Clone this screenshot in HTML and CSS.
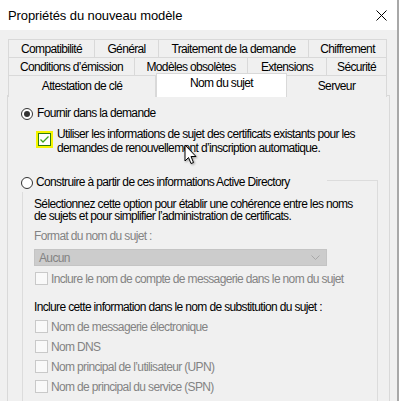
FILE: index.html
```html
<!DOCTYPE html>
<html lang="fr">
<head>
    <meta charset="UTF-8">
    <meta name="viewport" content="width=device-width, initial-scale=1.0">
    <title>Propriétés du nouveau modèle</title>
    <link rel="stylesheet" href="styles.css">
</head>
<body>
    <div class="window">
        <div class="titlebar">
            <span class="title">Propriétés du nouveau modèle</span>
            <svg class="close" width="11" height="11" viewBox="0 0 11 11">
                <path d="M0.5 0.5 L10.5 10.5 M10.5 0.5 L0.5 10.5" stroke="#000" stroke-width="1" fill="none"/>
            </svg>
        </div>

        <div class="tabs">
            <div class="tab-row">
                <div class="tab" style="width:87px">Compatibilité</div>
                <div class="tab" style="width:64px">Général</div>
                <div class="tab" style="width:150px">Traitement de la demande</div>
                <div class="tab" style="width:78px">Chiffrement</div>
            </div>
            <div class="tab-row">
                <div class="tab" style="width:127px">Conditions d’émission</div>
                <div class="tab" style="width:113px">Modèles obsolètes</div>
                <div class="tab" style="width:79px">Extensions</div>
                <div class="tab" style="width:60px">Sécurité</div>
            </div>
            <div class="tab-row front">
                <div class="tab" style="width:148px">Attestation de clé</div>
                <div class="tab active" style="width:131px">Nom du sujet</div>
                <div class="tab" style="width:100px">Serveur</div>
            </div>
        </div>

        <div class="panel">
            <div class="radio-row first">
                <span class="radio checked"></span>
                <span class="label">Fournir dans la demande</span>
            </div>

            <div class="check-row highlighted">
                <span class="marker">
                    <svg class="check-box on" width="13" height="13" viewBox="0 0 13 13">
                        <rect x="0.5" y="0.5" width="12" height="12" fill="#fff" stroke="#2f7d10"/>
                        <path d="M2.5 6.5 L5 9 L10.5 3.5" stroke="#3fa31c" stroke-width="1.3" fill="none"/>
                    </svg>
                </span>
                <span class="label wrap">Utiliser les informations de sujet des certificats existants pour les demandes de renouvellement d’inscription automatique.</span>
            </div>

            <div class="group-title">
                <span class="radio"></span>
                <span class="label">Construire à partir de ces informations Active Directory</span>
            </div>
            <div class="group">
                <p class="intro">Sélectionnez cette option pour établir une cohérence entre les noms de sujets et pour simplifier l’administration de certificats.</p>
                <div class="field-label disabled">Format du nom du sujet :</div>
                <div class="select disabled">
                    <span>Aucun</span>
                    <svg width="9" height="5" viewBox="0 0 9 5">
                        <path d="M0.5 0.5 L4.5 4.5 L8.5 0.5" stroke="#a8a8a8" fill="none"/>
                    </svg>
                </div>
                <div class="option disabled mail">
                    <span class="box"></span>
                    <span>Inclure le nom de compte de messagerie dans le nom du sujet</span>
                </div>

                <div class="field-label subst">Inclure cette information dans le nom de substitution du sujet :</div>
                <div class="option disabled">
                    <span class="box"></span>
                    <span>Nom de messagerie électronique</span>
                </div>
                <div class="option disabled">
                    <span class="box"></span>
                    <span>Nom DNS</span>
                </div>
                <div class="option disabled">
                    <span class="box"></span>
                    <span>Nom principal de l’utilisateur (UPN)</span>
                </div>
                <div class="option disabled">
                    <span class="box"></span>
                    <span>Nom de principal du service (SPN)</span>
                </div>
            </div>
        </div>

        <!-- mouse pointer over the checkbox label -->
        <svg class="cursor" width="14" height="22" viewBox="0 0 14 22">
            <path d="M1 1 L1 17 L4.5 13.5 L7 19.5 L9.5 18.5 L7 12.5 L12 12.5 Z" fill="#fff" stroke="#000" stroke-width="1" stroke-linejoin="round"/>
        </svg>
    </div>
</body>
</html>
```

FILE: styles.css
```css
* {
    margin: 0;
    padding: 0;
    box-sizing: border-box;
}

body {
    width: 399px;
    height: 401px;
    overflow: hidden;
    background: #f0f0f0;
    font-family: 'Liberation Sans', Arial, sans-serif;
    font-size: 12px;
    letter-spacing: -0.65px;
    color: #000;
}

.window {
    position: relative;
    width: 399px;
    height: 401px;
    overflow: hidden;
    border-right: 2px solid #a8a8a8;
}

.titlebar {
    height: 30px;
    background: #fff;
    display: flex;
    align-items: center;
    justify-content: space-between;
    padding: 0 10px 0 8px;
}

.title {
    font-size: 13px;
    letter-spacing: -0.1px;
}

.close {
    margin-top: 1px;
}

/* tab strip */
.tabs {
    margin: 9px 0 0 8px;
    width: 379px;
}

.tab-row {
    display: flex;
    height: 18px;
}

.tab-row.front {
    height: 21px;
    margin-bottom: -1px;
}

.tab {
    height: 18px;
    border: 1px solid #d9d9d9;
    border-bottom: none;
    background: #f0f0f0;
    display: flex;
    align-items: center;
    justify-content: center;
    line-height: 1;
    white-space: nowrap;
}

.tab + .tab {
    border-left: none;
}

.front .tab {
    height: 22px;
    padding-bottom: 2px;
}

.tab.active {
    position: relative;
    z-index: 2;
    height: 24px;
    margin-top: -2px;
    background: #fff;
    border-left: 1px solid #d9d9d9;
    padding-bottom: 5px;
}

.tab.active + .tab {
    border-left: none;
}

/* page body */
.panel {
    margin-left: 7px;
    width: 383px;
    height: 320px;
    border: 1px solid #d9d9d9;
    background: #f0f0f0;
}

.radio-row,
.group-title {
    display: flex;
    align-items: center;
    height: 13px;
    margin-left: 13px;
}

.radio-row.first {
    margin-top: 11px;
}

.radio {
    width: 12px;
    height: 12px;
    border: 1px solid #333;
    border-radius: 50%;
    background: #fff;
    display: flex;
    align-items: center;
    justify-content: center;
    flex-shrink: 0;
}

.radio.checked::after {
    content: '';
    width: 6px;
    height: 6px;
    border-radius: 50%;
    background: #333;
}

.label {
    margin-left: 4px;
    line-height: 13px;
    white-space: nowrap;
}

.check-row {
    display: flex;
    align-items: flex-start;
    margin: 7px 0 0 28px;
}

.marker {
    display: flex;
    padding: 2px;
    margin-top: 4px;
    background: #f5f500;
}

.check-box {
    display: block;
}

.label.wrap {
    white-space: normal;
    width: 315px;
    line-height: 14px;
}

.group-title {
    position: relative;
    z-index: 1;
    width: 306px;
    height: 16px;
    margin-top: 21px;
    padding-bottom: 3px;
    background: #f0f0f0;
}

.group-title .label {
    margin-left: 3px;
}

.group {
    margin: -12px 0 0 14px;
    width: 356px;
    height: 240px;
    border: 1px solid #dcdcdc;
    padding: 17px 0 0 11px;
}

.intro {
    width: 322px;
    line-height: 12px;
}

.field-label {
    margin-top: 8px;
    line-height: 12px;
    white-space: nowrap;
}

.disabled {
    color: #838383;
}

.select {
    margin-top: 7px;
    width: 293px;
    height: 17px;
    background: #cccccc;
    border: 1px solid #c4c4c4;
    display: flex;
    align-items: center;
    justify-content: space-between;
    padding: 0 6px 0 4px;
}

.option {
    display: flex;
    align-items: center;
    height: 13px;
    margin-top: 7px;
    padding-left: 1px;
    white-space: nowrap;
}

.option.mail {
    margin-top: 6px;
}

.box {
    width: 13px;
    height: 13px;
    border: 1px solid #c9c9c9;
    background: #f9f9f9;
    margin-right: 3px;
    flex-shrink: 0;
}

.field-label.subst {
    margin-top: 16px;
    color: #000;
}

.cursor {
    position: absolute;
    left: 184px;
    top: 144px;
    filter: drop-shadow(1px 1px 1px rgba(0, 0, 0, 0.35));
}
```
